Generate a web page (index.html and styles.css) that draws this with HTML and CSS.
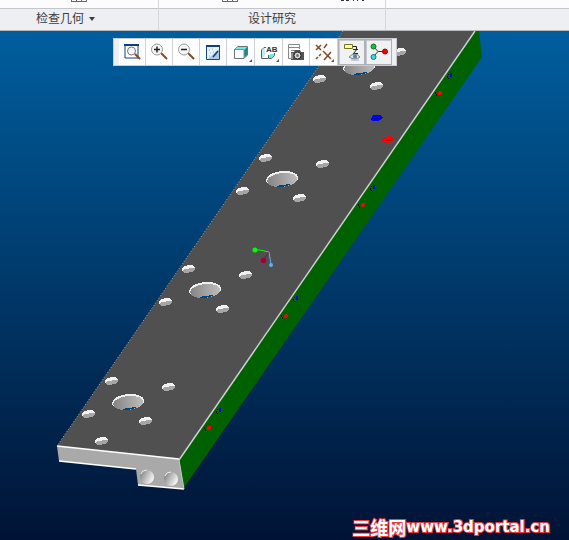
FILE: index.html
```html
<!DOCTYPE html>
<html lang="zh-CN">
<head>
<meta charset="utf-8">
<title>设计研究</title>
<link rel="stylesheet" href="styles.css">
</head>
<body>
<header class="ribbon">
  <div class="ribbon-group ribbon-group-check">
    <div class="ribbon-tools">
      <svg class="tool-scrap" viewBox="0 0 16 2" aria-hidden="true"><path d="M.5 0V2M5.5 0V2M10.5 0V2M15.5 0V2M0 1.5H16" stroke="#66676a" fill="none"/></svg>
    </div>
    <button class="group-label" type="button">检查几何<span class="caret"></span></button>
  </div>
  <div class="ribbon-group ribbon-group-study">
    <div class="ribbon-tools">
      <svg class="tool-scrap" viewBox="0 0 16 2" aria-hidden="true"><path d="M.5 0V2M5.5 0V2M10.5 0V2M15.5 0V2M0 1.5H16" stroke="#66676a" fill="none"/></svg>
      <svg class="label-scrap" viewBox="0 0 24 2" aria-hidden="true"><path d="M0 .5H3M5 .5H8M12 .5H13M16 .5H17M21 .5H23" stroke="#333" fill="none"/></svg>
    </div>
    <div class="group-label">设计研究</div>
  </div>
  <div class="ribbon-group ribbon-group-rest">
    <div class="ribbon-tools"></div>
    <div class="group-label"></div>
  </div>
</header>
<main class="viewport">
  <svg class="model" viewBox="0 31 569 509" aria-hidden="true">
    <defs>
      <linearGradient id="bore" x1="0" x2="1"><stop offset="0" stop-color="#858585"/><stop offset="1" stop-color="#bdbdbd"/></linearGradient>
      <linearGradient id="port" x1="0" x2="1" y2=".5"><stop offset="0" stop-color="#777"/><stop offset="1" stop-color="#f4f4f4"/></linearGradient>
      <g id="small" shape-rendering="crispEdges">
        <path d="M-6 1L-6-1L-4-3L1-4H4L7-2V1L4 3L-2 4H-4Z" fill="#f2f2f2"/>
        <path d="M-5 1L-4 0L0 0L2-1L7-1V1L4 3L-2 4H-4Z" fill="#a5a5a5"/>
      </g>
      <g id="large" shape-rendering="crispEdges">
        <ellipse cy="1" rx="16" ry="8" transform="rotate(-6)" fill="#f0f0f0"/>
        <ellipse cy="2" rx="15" ry="7" transform="rotate(-6)" fill="url(#bore)"/>
        <path d="M-5 8L-2 7H2L5 6H9L5 8L-1 9H-5Z" fill="#004782"/>
      </g>
      <g id="cluster">
        <use href="#large"/>
        <use href="#small" x="-17" y="-20"/><use href="#small" x="40" y="-14"/>
        <use href="#small" x="-40" y="13"/><use href="#small" x="17" y="20"/>
      </g>
      <g id="marks" shape-rendering="crispEdges">
        <path d="M-1-2H1V2H-1Z" fill="#00f"/>
        <path d="M-3-1V0M-4 1V3M-3 3V4M-16 17V19M-15 19V21" stroke="#000"/>
        <circle cx="-11" cy="18" r="2" fill="#f00"/>
      </g>
    </defs>
    <path d="M474 31H479L482 57L183 489L179 459Z" fill="#006100"/>
    <path d="M343 31H474L179 459L57 446Z" fill="#505050"/>
    <path d="M343 31L57 446" fill="none" stroke="#aaa" stroke-dasharray="1 2"/>
    <path d="M57 446L179 459L184 489L138 485L136 469L59 461Z" fill="#a9a9a9"/>
    <path d="M57 446L179 459M59 461L136 469M138 485L184 489" fill="none" stroke="#fff" stroke-width="1.5"/>
    <path d="M475 31L179 460" fill="none" stroke="#d0d0d0" stroke-width="1.5"/>
    <path d="M179 460L184 489" fill="none" stroke="#c6c6c6"/>
    <ellipse cx="147" cy="477" rx="7" ry="7" fill="url(#port)"/>
    <ellipse cx="171" cy="479" rx="7" ry="7" fill="url(#port)"/>
    <path d="M141 474Q142 470 147 470M165 476Q166 472 171 472" fill="none" stroke="#eee"/>
    <use href="#cluster" x="128" y="401"/>
    <use href="#cluster" x="205" y="289"/>
    <use href="#cluster" x="282" y="178"/>
    <use href="#cluster" x="359" y="66"/>
    <use href="#small" x="101" y="441"/>
    <g shape-rendering="crispEdges">
      <path d="M371 119L373 115H380L383 117L381 120L376 121H372Z" fill="#00f"/>
      <path d="M374 118H381" stroke="#0000b0"/>
      <path d="M382 141L384 137L391 136L394 139L391 142L386 143Z" fill="#f00"/>
      <path d="M386 140H391" stroke="#b00000"/>
    </g>
    <path d="M255 250H260L269 252" fill="none" stroke="#0f0"/>
    <path d="M269 252L264 259" stroke="#a00038"/>
    <path d="M269 252L271 264" stroke="#5ab0f8"/>
    <circle cx="255" cy="250" r="2.5" fill="#0f0"/>
    <circle cx="263.500" cy="260.500" r="2.800" fill="#a00038"/>
    <circle cx="271" cy="265" r="2" fill="#5ab0f8"/>
    <use href="#marks" x="451" y="75"/>
    <use href="#marks" x="374" y="187"/>
    <use href="#marks" x="297" y="298"/>
    <use href="#marks" x="220" y="410"/>
  </svg>
  <div class="toolbar" role="toolbar" aria-label="视图">
    <span class="grip"></span>
    <button type="button" aria-label="重新调整"><svg viewBox="0 0 24 24"><path d="M5 5H18V18H5Z" fill="#fff" stroke="#0b3e91"/><path d="M4 5H19" stroke="#0b3e91" stroke-width="2"/><path d="M15 14L20 19" stroke="#87462b" stroke-width="2"/><circle cx="11.500" cy="11" r="4" fill="#f4f8fa" stroke="#777"/></svg></button>
    <button type="button" aria-label="放大"><svg viewBox="0 0 24 24"><path d="M14 13L20 19" stroke="#87462b" stroke-width="2"/><circle cx="10" cy="9.500" r="5.500" fill="#f5f5f5" stroke="#999"/><path d="M7 9.500H13M10 6.500V12.500" stroke="#222" stroke-width="1.500"/></svg></button>
    <button type="button" aria-label="缩小"><svg viewBox="0 0 24 24"><path d="M14 13L20 19" stroke="#87462b" stroke-width="2"/><circle cx="10" cy="9.500" r="5.500" fill="#f5f5f5" stroke="#999"/><path d="M7 9.500H13" stroke="#222" stroke-width="1.500"/></svg></button>
    <button type="button" aria-label="重画"><svg viewBox="0 0 24 24"><path d="M5.500 5.500H18.500V19.500H5.500Z" fill="#e9f4fa" stroke="#164983"/><path d="M7 19L18 9V19Z" fill="#a9c9e5"/><path d="M5 6H19" stroke="#0b3e91" stroke-width="2"/><path d="M12 17L17 11" stroke="#0b3e91" stroke-width="1.500"/><path d="M8 10H9M11 9H12M9 13H10M8 16H9M12 12H13" stroke="#8bacc5"/></svg></button>
    <button type="button" class="has-menu" aria-label="显示样式"><svg viewBox="0 0 24 24"><path d="M5.500 9.500L9 6.500H18.500V15L15 18.500H5.500Z" fill="#fff" stroke="#6d7478"/><path d="M6 9.500L9 7H18L15 9.500Z" fill="#63ebea"/><path d="M15 10L18 7V15L15 18Z" fill="#148a8b"/><path d="M5.500 9.500H15V18" fill="none" stroke="#8a9092"/><path class="menu-mark" d="M23 19V22H20Z"/></svg></button>
    <button type="button" class="has-menu" aria-label="已命名视图"><svg viewBox="0 0 24 24"><path d="M9 7.500H7L4.500 10V18.500H11M17.500 13V15.500L14.500 18.500H11.500V15" fill="none" stroke="#555e62"/><path d="M5 10L8 8V15L5 18Z" fill="#bceeee"/><path d="M12 18V15L14 14H17V15L15 18Z" fill="#63ebea"/><text class="icon-text" x="9" y="12">AB</text><path class="menu-mark" d="M22 19V22H19Z"/></svg></button>
    <button type="button" aria-label="视图管理器"><svg viewBox="0 0 24 24"><path d="M7 18.500H4.500V4.500H15.500V9M4 7.500H15M7 10.500H12" fill="none" stroke="#888"/><path d="M7 12H10L11 10H16L17 12H20V20H7Z" fill="#555"/><path d="M8 13V19" stroke="#ccc"/><circle cx="13.500" cy="15.500" r="3.500" fill="#ddd" stroke="#222"/><circle cx="13.500" cy="15.500" r="1.500" fill="#777"/></svg></button>
    <button type="button" class="has-menu" aria-label="基准显示"><svg viewBox="0 0 24 24"><path d="M4 5L9 10M9 5L4 10M15 4L12 8M11 11L19 19M19 12L12 20M9 14L7 16M6 17L4 19" fill="none" stroke="#884929" stroke-width="1.500"/><path class="menu-mark" d="M22 19V22H19Z"/></svg></button>
    <button type="button" class="pressed" aria-pressed="true" aria-label="注释显示"><svg viewBox="0 0 24 24"><path d="M4.500 4.500H12.500V8.500H4.500Z" fill="#ffffa0" stroke="#777320"/><path d="M13 6.500H16.500V9M13 9.500H18M17 9L14 13M13 13.500H18" fill="none" stroke="#222"/><path d="M9 17Q15 11 20 17Q15 21 9 17Z" fill="#dce6ed" stroke="#75838c"/><circle cx="15" cy="16.500" r="2" fill="#5b7fa0"/><path d="M11 20H19" stroke="#aaa"/></svg></button>
    <button type="button" class="pressed" aria-pressed="true" aria-label="旋转中心"><svg viewBox="0 0 24 24"><path d="M6 6L11 11.500L6 17M11 11.500H18" fill="none" stroke="#333"/><circle cx="6.500" cy="6.500" r="2.500" fill="#0c3" stroke="#176b22"/><circle cx="6.500" cy="17" r="2.500" fill="#2edce4" stroke="#187c86"/><circle cx="18" cy="11.500" r="2.500" fill="#f00" stroke="#900"/></svg></button>
    <span class="grip"></span>
  </div>
  <div class="watermark"><span class="site-name">三维网</span>www.3dportal.cn</div>
</main>
</body>
</html>
```

FILE: styles.css
```css
* { box-sizing: border-box; }

body {
  margin: 0;
  min-height: 100vh;
  display: flex;
  flex-direction: column;
  font: 12px/16px "Liberation Sans", "Noto Sans CJK SC", sans-serif;
  color: #3c3d40;
}

button {
  margin: 0;
  padding: 0;
  border: 0;
  background: none;
  font: inherit;
  color: inherit;
}

svg { display: block; }

.ribbon {
  display: flex;
  background: #eeeff2;
  border-bottom: 1px solid #b5b8bd;
}

.ribbon-group { border-right: 1px solid #d5d7da; }
.ribbon-group-check { flex: 0 0 159px; }
.ribbon-group-study { flex: 0 0 227px; }
.ribbon-group-rest { flex: 1; border-right: 0; }

.ribbon-tools {
  display: flex;
  height: 9px;
  background: #fcfcfc;
  border-bottom: 1px solid #c3c6cb;
}

.ribbon-group-check .ribbon-tools { padding-left: 71px; }
.ribbon-group-study .ribbon-tools { padding-left: 63px; gap: 103px; }
.tool-scrap { width: 16px; height: 2px; }
.label-scrap { width: 24px; height: 2px; }

.group-label {
  display: flex;
  align-items: center;
  justify-content: center;
  width: 100%;
  height: 21px;
  padding-bottom: 2px;
}

.ribbon-group-check .group-label {
  justify-content: flex-start;
  padding-left: 36px;
  gap: 5px;
}

.caret {
  border: 3px solid transparent;
  border-top: 4px solid #3c3d40;
  border-bottom: 0;
}

.viewport {
  position: relative;
  flex: 1;
  overflow: hidden;
  background: linear-gradient(#005e9e, #001335);
}

.model { width: 100%; }

.toolbar {
  position: absolute;
  top: 7px;
  left: 113px;
  display: flex;
  height: 28px;
  border: 1px solid #c8cbd0;
  background: #fff;
}

.toolbar button {
  display: flex;
  align-items: center;
  justify-content: center;
  width: 27px;
  border-right: 1px solid #d0d2d6;
}

.toolbar button.has-menu { width: 28px; }
.toolbar svg { width: 24px; height: 24px; }

.toolbar button.pressed {
  border: 1px solid #adb0b5;
  box-shadow: inset 1px 1px #c9cbcf;
  background: #f0f1f3;
}

.grip { width: 5px; background: #eeeff2; }
.grip:last-child { width: 4px; }
.menu-mark { fill: #555; }
.icon-text { font: bold 8px "Liberation Sans", sans-serif; fill: #333; }

.watermark {
  position: absolute;
  right: 19px;
  bottom: 3px;
  display: flex;
  align-items: center;
  font: bold 15px/20px "DejaVu Sans", sans-serif;
  color: #fff;
  -webkit-text-stroke: 2px #f03a40;
  paint-order: stroke fill;
}

.site-name { font: bold 18px/20px "Noto Sans CJK SC", sans-serif; }
```
